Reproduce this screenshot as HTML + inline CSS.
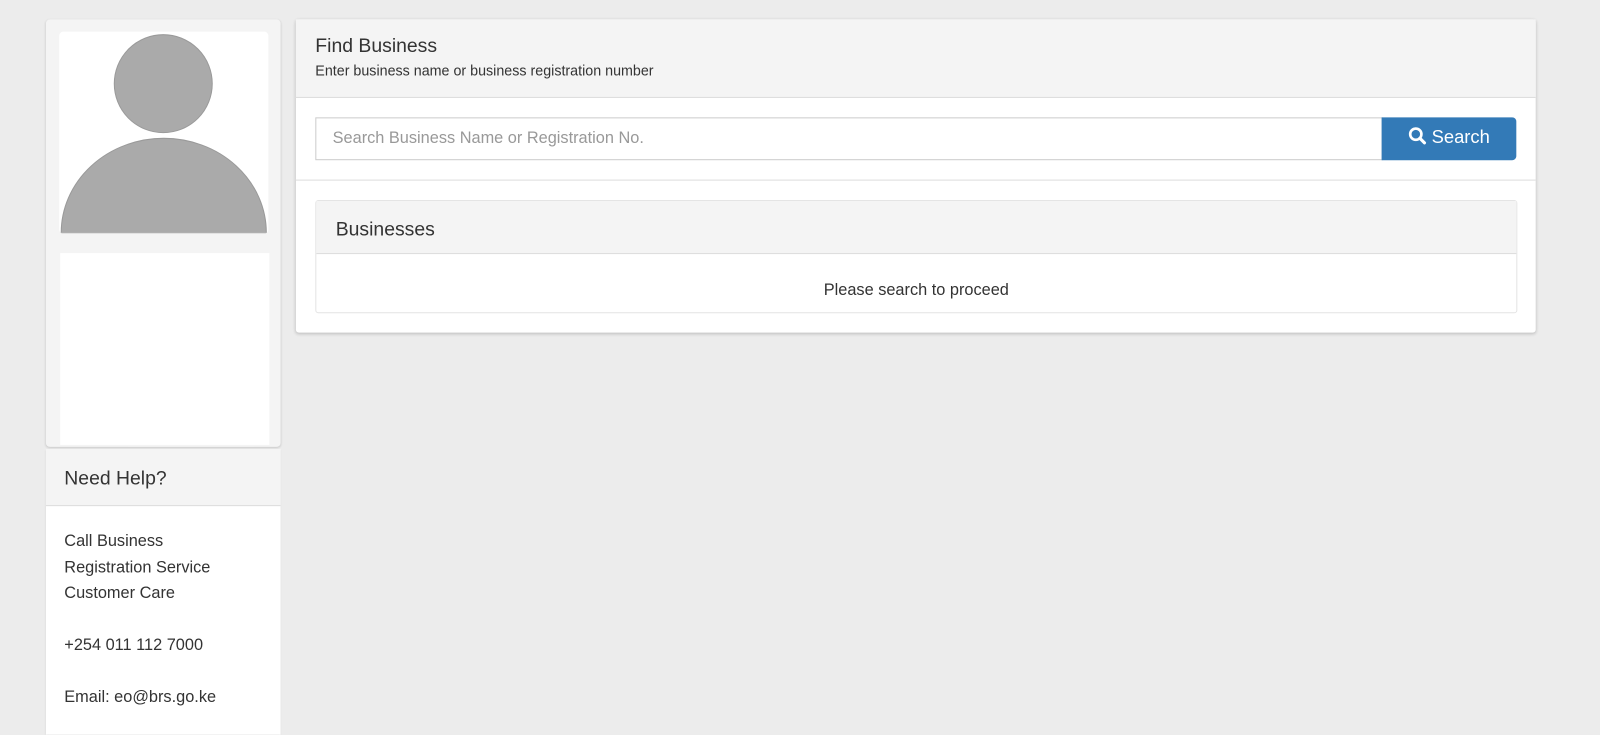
<!DOCTYPE html><html><head><style>
body{margin:0;width:1600px;height:715px;overflow:hidden;background:#ececec;font-family:"Liberation Sans",sans-serif;color:#333;position:relative}
#w{position:absolute;left:0;top:0;width:1568px;height:701px;transform:scale(1.0204);transform-origin:0 0}
.a{position:absolute;box-sizing:border-box}
</style></head><body><div id="w">
<div class="a" style="left:45px;top:19px;width:230px;height:419px;background:#f4f4f4;border-radius:4px;box-shadow:0 1px 2px rgba(0,0,0,.15)"></div>
<div class="a" style="left:58px;top:31px;width:205px;height:198px;background:#fff;border-radius:4px;overflow:hidden">
<svg width="205" height="198"><circle cx="102" cy="51" r="48" fill="#aaa" stroke="#9a9a9a"/><path d="M2 197 A100 92 0 0 1 203 197 Z" fill="#aaa" stroke="#9a9a9a"/><line x1="0" y1="197.5" x2="205" y2="197.5" stroke="#ccc"/></svg></div>
<div class="a" style="left:59px;top:248px;width:205px;height:188px;background:#fff"></div>
<div class="a" style="left:45px;top:440px;width:230px;height:280px;background:#fff;box-shadow:0 1px 2px rgba(0,0,0,.15)">
<div style="height:56px;background:#f4f4f4;border-bottom:1px solid #ddd;padding:19px 18px 0;box-sizing:border-box;font-size:19px">Need Help?</div>
<div style="padding:22px 18px;font-size:16px;line-height:25.5px;white-space:nowrap">Call Business<br>Registration Service<br>Customer Care<br><br>+254 011 112 7000<br><br>Email: eo@brs.go.ke</div></div>
<div class="a" style="left:290px;top:19px;width:1215px;height:307px;background:#fff;border-radius:3px;box-shadow:0 1px 3px rgba(0,0,0,.2)">
<div style="height:77px;background:#f4f4f4;border-bottom:1px solid #ddd;padding:16px 19px;box-sizing:border-box"><div style="font-size:19px">Find Business</div><div style="font-size:14px;margin-top:4px">Enter business name or business registration number</div></div>
<div class="a" style="left:19px;top:96px;width:1046px;height:42px;border:1px solid #ccc;padding:11px 16px;font-size:16px;color:#999">Search Business Name or Registration No.</div>
<div class="a" style="left:1064px;top:96px;width:132px;height:42px;background:#337ab7;border-radius:0 4px 4px 0;color:#fff;font-size:18px;padding:9px 0 0 26px"><svg width="18" height="18" style="vertical-align:-2px"><circle cx="7.5" cy="7.5" r="5.5" fill="none" stroke="#fff" stroke-width="2.6"/><line x1="11.5" y1="11.5" x2="16" y2="16" stroke="#fff" stroke-width="3" stroke-linecap="round"/></svg> Search</div>
<div class="a" style="left:0;top:157px;width:1215px;border-top:1px solid #ddd"></div>
<div class="a" style="left:19px;top:177px;width:1178px;height:111px;border:1px solid #e4e4e4;border-radius:3px">
<div style="height:52px;background:#f4f4f4;border-bottom:1px solid #ddd;padding:18px 19px 0;box-sizing:border-box;font-size:19px">Businesses</div>
<div style="text-align:center;font-size:16px;padding-top:27px">Please search to proceed</div></div>
</div>
</div></body></html>
